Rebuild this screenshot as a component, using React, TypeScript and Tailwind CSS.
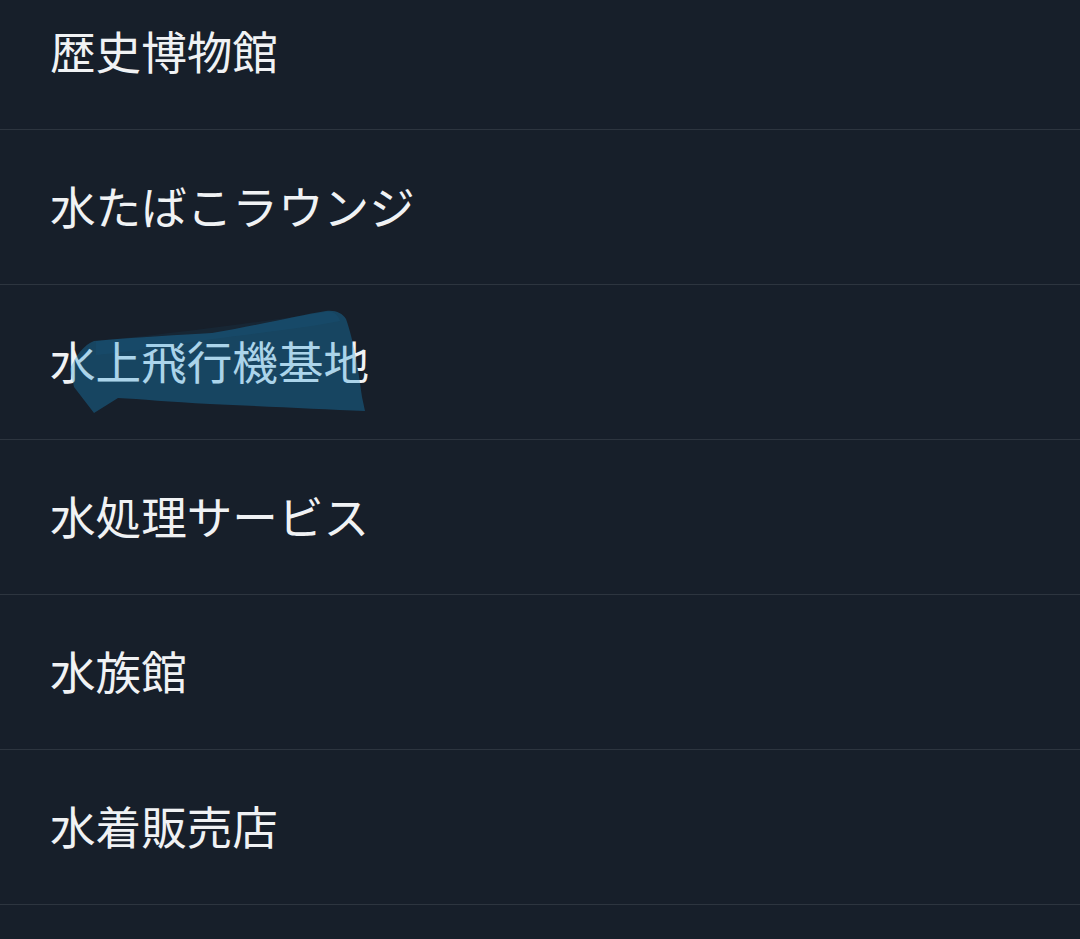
const items = [
  "歴史博物館",
  "水たばこラウンジ",
  "水上飛行機基地",
  "水処理サービス",
  "水族館",
  "水着販売店",
  "",
]

function Highlight() {
  return (
    <svg
      className="absolute left-0 top-0 pointer-events-none"
      width="400"
      height="155"
      viewBox="0 0 400 155"
    >
      <path
        d="M70 84 C76 70 84 60 94 56 C140 52 180 50 212 48 C260 40 300 30 326 26 C336 25 342 28 346 34 C352 50 358 80 362 112 L365 126 C320 124 260 121 210 119 C170 117 140 114 118 113 L94 128 L74 102 Z"
        fill="rgb(25,150,215)"
        fillOpacity="0.32"
      />
      <path
        d="M96 56 C160 50 240 40 326 27 C334 26 338 30 340 36 C300 44 240 50 200 56 C160 62 120 68 96 70 Z"
        fill="rgb(30,150,220)"
        fillOpacity="0.06"
      />
    </svg>
  )
}

export default function App() {
  return (
    <div
      className="w-[1080px] h-[939px] overflow-hidden bg-[#171f2a] text-[#f0f2f4]"
      style={{ fontFamily: '"Noto Sans CJK JP", "Noto Sans", sans-serif' }}
    >
      <ul className="-mt-[25px]">
        {items.map((name, i) => (
          <li
            key={i}
            className="relative h-[155px] flex items-center px-[50px] border-b border-[#2d353f] text-[45.6px] leading-none"
          >
            <span className="-mt-[2px]">{name}</span>
            {i === 2 && <Highlight />}
          </li>
        ))}
      </ul>
    </div>
  )
}
